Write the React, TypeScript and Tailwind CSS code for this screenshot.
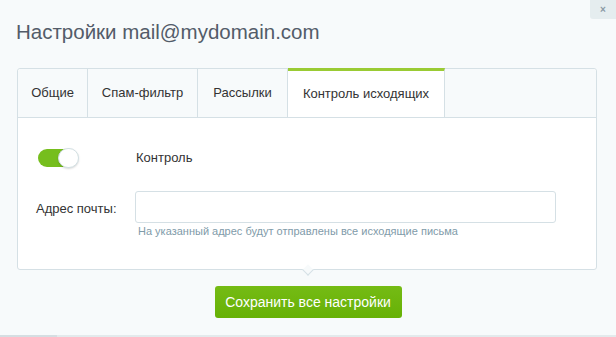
import React from "react";

const tabs = [
    { label: "Общие", w: "w-[70px]" },
    { label: "Спам-фильтр", w: "w-[110px]" },
    { label: "Рассылки", w: "w-[90px]" },
    { label: "Контроль исходящих", w: "w-[157px]" },
];

export default function App() {
    const active = 3;
    return (
        <div
            className="relative w-[616px] h-[337px] bg-[#f7fafb] overflow-hidden"
            style={{ fontFamily: '"Liberation Sans", Arial, sans-serif' }}
        >
            {/* Закрыть */}
            <div className="absolute top-0 right-0 w-[26px] h-[19px] bg-[#e5edef] rounded-bl-[3px] flex items-center justify-center text-[10px] leading-none text-[#8a9aa5] font-bold">
                ×
            </div>

            <div className="px-[17px] pt-[19px]">
                <h1 className="text-[20.5px] leading-[26px] text-[#535c69] ml-[-1px]">
                    Настройки mail@mydomain.com
                </h1>

                {/* Панель с вкладками */}
                <div className="relative mt-[23px] w-[580px] h-[202px] bg-white border border-[#d5e0e5] rounded-[3px]">
                    <div className="flex h-[49px] bg-[#f7fafb] border-b border-[#d5e0e5] rounded-t-[3px]">
                        {tabs.map((t, i) => (
                            <div
                                key={t.label}
                                className={
                                    i === active
                                        ? `${t.w} flex items-center justify-center h-[49px] bg-white border-r border-[#d5e0e5] border-t-[3px] border-t-[#9acb34] mt-[-1px] text-[13px] text-[#333] pb-[1px]`
                                        : `${t.w} flex items-center justify-center h-[48px] border-r border-[#d5e0e5] text-[13px] text-[#333]`
                                }
                            >
                                {t.label}
                            </div>
                        ))}
                    </div>

                    <div className="pt-[30px] pl-[20px]">
                        <div className="flex items-center h-[19px]">
                            <div className="relative w-[40px] h-[18px] rounded-full bg-[#76be1d]">
                                <div className="absolute right-[-1px] top-[-1px] w-[21px] h-[20px] rounded-full bg-white border border-[#d3e0e4] shadow-[0_1px_2px_rgba(0,0,0,0.15)]" />
                            </div>
                            <span className="ml-[58px] text-[13px] text-[#333]">Контроль</span>
                        </div>

                        <div className="flex mt-[24px]">
                            <label className="w-[99px] pt-[8px] text-[13px] text-[#333] ml-[-2px]">
                                Адрес почты:
                            </label>
                            <div>
                                <div className="w-[421px] h-[32px] border border-[#d5e0e5] rounded-[3px] bg-white" />
                                <div className="mt-[1px] ml-[3px] text-[11px] leading-[14px] text-[#7f9ba9]">
                                    На указанный адрес будут отправлены все исходящие письма
                                </div>
                            </div>
                        </div>
                    </div>

                    {/* Уголок */}
                    <div className="absolute bottom-[-5px] left-[286px] w-[8px] h-[8px] bg-[#f7fafb] border-r border-b border-[#d5e0e5] rotate-45" />
                </div>

                <div className="flex justify-center mt-[16px]">
                    <button className="h-[32px] px-[10px] rounded-[3px] bg-gradient-to-b from-[#75bb14] to-[#66b105] text-white text-[14px] w-[187px]">
                        Сохранить все настройки
                    </button>
                </div>
            </div>

            <div className="absolute bottom-0 left-0 right-0 h-[2px] bg-[#e3eaec]">
                <div className="w-[57px] h-full bg-[#d5dee2]" />
            </div>
        </div>
    );
}
